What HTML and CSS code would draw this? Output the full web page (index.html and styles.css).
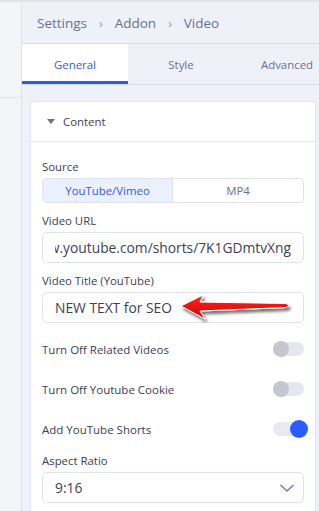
FILE: index.html
```html
<!DOCTYPE html>
<html lang="en">
<head>
    <meta charset="UTF-8">
    <title>Video Addon Settings</title>
    <link rel="stylesheet" href="styles.css">
</head>
<body>
    <div class="shade"></div>
    <div class="layout">
        <div class="sidebar">
            <div class="sidebar-top"></div>
        </div>

        <div class="panel">
            <div class="crumbs">
                <span>Settings</span><span class="sep">&rsaquo;</span>
                <span>Addon</span><span class="sep">&rsaquo;</span>
                <span>Video</span>
            </div>

            <div class="tabs">
                <div class="tab active">General</div>
                <div class="tab">Style</div>
                <div class="tab">Advanced</div>
            </div>

            <div class="panel-body">
                <div class="card">
                    <div class="card-head">
                        <span class="caret"></span>
                        <span>Content</span>
                    </div>

                    <div class="card-body">
                        <div class="field first">
                            <div class="label">Source</div>
                            <div class="segment">
                                <div class="seg-item on">YouTube/Vimeo</div>
                                <div class="seg-item">MP4</div>
                            </div>
                        </div>

                        <div class="field">
                            <div class="label">Video URL</div>
                            <div class="input">
                                <div class="scroll">
                                    <span>https://www.youtube.com/shorts/7K1GDmtvXng</span>
                                </div>
                            </div>
                        </div>

                        <div class="field">
                            <div class="label">Video Title (YouTube)</div>
                            <div class="input title">
                                <span>NEW TEXT for SEO</span>
                                <!-- annotation arrow -->
                                <svg class="pointer" width="116" height="32" viewBox="0 0 116 32">
                                    <defs>
                                        <linearGradient id="red" x1="0" y1="0" x2="0" y2="1">
                                            <stop offset="0" stop-color="#ff2a1f"/>
                                            <stop offset="1" stop-color="#d30000"/>
                                        </linearGradient>
                                        <filter id="drop" x="-10%" y="-30%" width="130%" height="170%">
                                            <feGaussianBlur in="SourceAlpha" stdDeviation="1.6"/>
                                            <feOffset dx="2" dy="2.5" result="b"/>
                                            <feComponentTransfer><feFuncA type="linear" slope="0.55"/></feComponentTransfer>
                                            <feMerge><feMergeNode/><feMergeNode in="SourceGraphic"/></feMerge>
                                        </filter>
                                    </defs>
                                    <path d="M3 15 L25 4 L22 11 L108 12.5 L111 14.5 L108 16.5 L22 20 L27 28 Z"
                                          fill="url(#red)" stroke="#fff" stroke-width="1" stroke-linejoin="round" filter="url(#drop)"/>
                                </svg>
                            </div>
                        </div>

                        <div class="switch-row top">
                            <span>Turn Off Related Videos</span>
                            <span class="switch"></span>
                        </div>
                        <div class="switch-row">
                            <span>Turn Off Youtube Cookie</span>
                            <span class="switch"></span>
                        </div>
                        <div class="switch-row">
                            <span>Add YouTube Shorts</span>
                            <span class="switch on"></span>
                        </div>

                        <div class="field ratio">
                            <div class="label">Aspect Ratio</div>
                            <div class="input select">
                                <span>9:16</span>
                                <svg width="16" height="10" viewBox="0 0 16 10">
                                    <path d="M1.5 2 L8 8 L14.5 2" fill="none" stroke="#7a7ea0" stroke-width="1.6"/>
                                </svg>
                            </div>
                        </div>
                    </div>
                </div>
            </div>
        </div>
    </div>
</body>
</html>
```

FILE: styles.css
```css
:root {
    --blue: #3558f5;
    --muted: #6b6f8e;
    --text: #3d4058;
    --line: #dfe2ef;
}

* {
    box-sizing: border-box;
}

body {
    margin: 0;
    width: 319px;
    height: 511px;
    overflow: hidden;
    font-family: "Open Sans", "Noto Sans", sans-serif;
    font-size: 11.4px;
    color: var(--text);
    background: #eff1f9;
}

.shade {
    height: 3px;
    background: linear-gradient(#dcdde2, #eff1f9);
}

.layout {
    display: flex;
    height: 508px;
}

.sidebar {
    width: 22px;
    flex: none;
    background: #f4f5f9;
    border-right: 1px solid #dcdff0;
}

.sidebar-top {
    height: 95px;
    border-bottom: 1px solid #e1e3ea;
}

.panel {
    flex: 1;
    min-width: 0;
    overflow: hidden;
}

.crumbs {
    height: 41px;
    display: flex;
    align-items: center;
    padding-left: 15px;
    font-size: 13.5px;
    color: var(--muted);
    border-bottom: 1px solid #d9dcee;
    white-space: nowrap;
}

.crumbs .sep {
    margin: 0 12px;
    font-size: 12px;
    color: #8d91aa;
}

.tabs {
    display: grid;
    grid-template-columns: 106px 106px 106px;
    height: 41px;
    border-bottom: 1px solid #d9dcee;
}

.tab {
    display: flex;
    align-items: center;
    justify-content: center;
    color: var(--muted);
    white-space: nowrap;
}

.tab.active {
    background: #fff;
    color: var(--blue);
    border-bottom: 3px solid #2f5bec;
    padding-top: 3px;
}

.panel-body {
    padding: 16px 3px 0 8px;
}

.card {
    background: #fff;
    border: 1px solid #e3e5f0;
    border-radius: 4px;
}

.card-head {
    height: 40px;
    display: flex;
    align-items: center;
    gap: 8px;
    padding-left: 16px;
    color: var(--text);
    border-bottom: 1px solid #e3e5f0;
}

.caret {
    width: 0;
    height: 0;
    border-left: 4px solid transparent;
    border-right: 4px solid transparent;
    border-top: 5px solid #6b6f8e;
}

.card-body {
    padding: 0 11px 20px 11px;
}

.field {
    margin-top: 9px;
}

.field.first {
    margin-top: 16px;
}

.field.ratio {
    margin-top: 3px;
}

.label {
    height: 18px;
    line-height: 18px;
    margin-bottom: 2px;
    white-space: nowrap;
}

.segment {
    display: grid;
    grid-template-columns: 1fr 1fr;
    height: 25px;
    border: 1px solid var(--line);
    border-radius: 4px;
    overflow: hidden;
}

.seg-item {
    display: flex;
    align-items: center;
    justify-content: center;
    color: var(--muted);
}

.seg-item.on {
    background: #eaf0fc;
    color: var(--blue);
    border-right: 1px solid var(--line);
}

.input {
    position: relative;
    height: 31px;
    display: flex;
    align-items: center;
    padding: 0 12px;
    border: 1px solid var(--line);
    border-radius: 5px;
    font-size: 13.8px;
    white-space: nowrap;
}

.scroll {
    flex: 1;
    min-width: 0;
    display: flex;
    justify-content: flex-end;
    overflow: hidden;
}

.scroll span {
    flex: none;
}

.input.select {
    justify-content: space-between;
    padding-right: 8px;
}

.pointer {
    position: absolute;
    left: 135px;
    top: -2px;
}

.switch-row {
    height: 40px;
    display: flex;
    align-items: center;
    justify-content: space-between;
    font-size: 11.5px;
    white-space: nowrap;
}

.switch-row.top {
    margin-top: 6px;
}

.switch {
    position: relative;
    width: 31px;
    height: 14px;
    border-radius: 7px;
    background: #e7e8ee;
}

.switch::after {
    content: "";
    position: absolute;
    left: 0;
    top: -1px;
    width: 16px;
    height: 16px;
    border-radius: 50%;
    background: #c4c6d0;
}

.switch.on {
    background: #e8eaf1;
}

.switch.on::after {
    left: 17px;
    top: -2px;
    width: 18px;
    height: 18px;
    background: #2b5cff;
}
```
